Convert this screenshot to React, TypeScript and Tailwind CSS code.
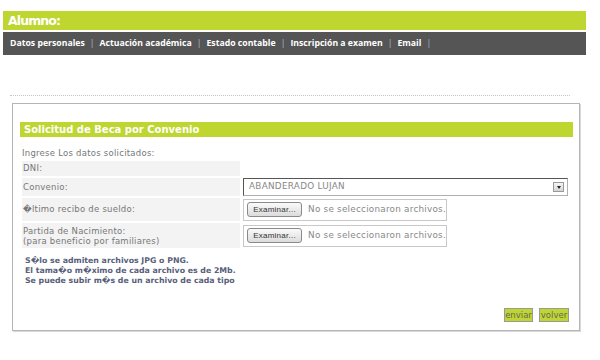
import React from "react";

const G = "bg-[#bed62f]";

function FileInput() {
  return (
    <div className="flex h-[22px] w-[204px] items-center border border-[#c8c8c8] bg-white pl-[3px]">
      <div className="flex h-[15px] w-[57px] items-center justify-center rounded-[3px] border border-[#8a8a8a] bg-gradient-to-b from-[#fafafa] to-[#dcdcdc] text-[8px] text-[#333] [font-family:'Liberation_Sans',sans-serif]">
        Examinar...
      </div>
      <span className="ml-[6px] whitespace-nowrap text-[8.8px] text-[#888] [font-family:'DejaVu_Sans',sans-serif]">
        No se seleccionaron archivos.
      </span>
    </div>
  );
}

export default function App() {
  const nav = ["Datos personales", "Actuación académica", "Estado contable", "Inscripción a examen", "Email"];
  return (
    <div className="relative h-[360px] w-[600px] overflow-hidden bg-white pt-[11px] [font-family:'DejaVu_Sans',sans-serif]">
      <div className={`ml-[3px] h-[19px] w-[583px] ${G} pl-[5px] text-[12.5px] font-bold leading-[19px] tracking-[-0.9px] text-white [font-family:'DejaVu_Sans',sans-serif]`}>
        Alumno:
      </div>
      <div className="ml-[3px] mt-[2px] flex h-[23px] w-[583px] items-center bg-[#555555] pl-[7px] text-[8.7px] font-bold text-white [font-family:'Open_Sans',sans-serif]">
        {nav.map((n) => (
          <span key={n} className="flex items-center">
            {n}
            <span className="mx-[5px] font-normal text-[#a9bfd4]">|</span>
          </span>
        ))}
      </div>
      <div className="ml-[10px] mt-[40px] w-[560px] border-t border-dotted border-[#c4c4c4]" />
      <div className="ml-[12px] mt-[7px] h-[228px] w-[568px] border border-[#b5b5b5] pl-[7px] pt-[18px] shadow-[1px_1px_0_#d8d8d8]">
        <div className={`h-[15px] w-[553px] ${G} pl-[4px] text-[10px] font-bold leading-[15px] text-white`}>
          Solicitud de Beca por Convenio
        </div>
        <div className="ml-[2px] mt-[11px] text-[8.5px] leading-[10px] tracking-[0.25px] text-[#777]">Ingrese Los datos solicitados:</div>
        <div className="ml-[2px] mt-[3px] grid grid-cols-[218px_325px] gap-x-[3px] gap-y-[2px] text-[8.5px] tracking-[0.25px] text-[#777]">
          <div className="flex h-[15px] items-center bg-[#f3f3f3] pl-[1px]">DNI:</div>
          <div />
          <div className="flex h-[18px] items-center bg-[#f3f3f3] pl-[1px]">Convenio:</div>
          <div className="relative flex h-[18px] items-center border border-[#b0b0b0] border-l-[#555] border-t-[#555] bg-white pl-[5px] text-[8.8px] tracking-[0.3px] text-[#888]">
            ABANDERADO LUJAN
            <div className="absolute right-[3px] top-[3px] flex h-[10px] w-[11px] items-center justify-center border border-[#999] bg-gradient-to-b from-[#f5f5f5] to-[#d5d5d5]">
              <div className="h-0 w-0 border-l-[2.5px] border-r-[2.5px] border-t-[3px] border-l-transparent border-r-transparent border-t-[#222]" />
            </div>
          </div>
          <div className="flex h-[23px] items-center bg-[#f3f3f3] pl-[1px]">{"\uFFFD"}ltimo recibo de sueldo:</div>
          <div className="flex items-center"><FileInput /></div>
          <div className="flex h-[25px] flex-col justify-center bg-[#f3f3f3] pl-[1px] leading-[10px]">
            <span>Partida de Nacimiento:</span>
            <span>(para beneficio por familiares)</span>
          </div>
          <div className="flex items-center"><FileInput /></div>
        </div>
        <div className="ml-[5px] mt-[8px] text-[7.8px] font-bold leading-[10px] text-[#58607a] [font-family:'DejaVu_Sans',sans-serif]">
          <div>S{"\uFFFD"}lo se admiten archivos JPG o PNG.</div>
          <div>El tama{"\uFFFD"}o m{"\uFFFD"}ximo de cada archivo es de 2Mb.</div>
          <div>Se puede subir m{"\uFFFD"}s de un archivo de cada tipo</div>
        </div>
        <div className="mr-[10px] mt-[22px] flex justify-end gap-[6px]">
          <div className={`h-[14px] w-[29px] border border-[#999] ${G} text-center text-[8.5px] leading-[12px] text-[#666]`}>enviar</div>
          <div className={`h-[14px] w-[30px] border border-[#999] ${G} text-center text-[8.5px] leading-[12px] text-[#666]`}>volver</div>
        </div>
      </div>
    </div>
  );
}
